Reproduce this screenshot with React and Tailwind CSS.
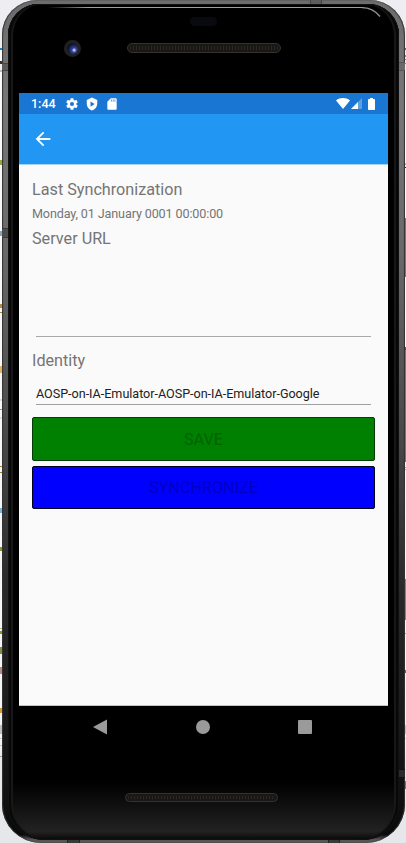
const leftSpecks = [
  'top-[48px] h-[2px] bg-[#1686cf]', 'top-[50px] h-[14px] bg-white', 'top-[61px] h-[3px] bg-[#333]', 'top-[70px] h-[2px] bg-[#b9bccb]',
  'top-[160px] h-[5px] bg-[#9aa63a]', 'top-[231px] h-[5px] bg-[#7fa9bb]', 'top-[304px] h-[4px] bg-[#bb8a4c]',
  'top-[312px] h-px bg-[#a88a30]', 'top-[366px] h-[7px] bg-[#ddb860]', 'top-[399px] h-[2px] bg-[#dcdce4]',
  'top-[409px] h-px bg-[#a1a239]', 'top-[417px] h-[2px] bg-[#dcdce4]', 'top-[466px] h-px bg-[#a07f35]',
  'top-[472px] h-px bg-[#a07f35]', 'top-[508px] h-[5px] bg-[#7cb5d8]', 'top-[547px] h-[4px] bg-[#8d9633]',
  'top-[628px] h-px bg-[#c4c270]', 'top-[631px] h-[3px] bg-[#92962e]', 'top-[647px] h-[7px] bg-[#83933c]',
  'top-[667px] h-[7px] bg-[#b98b83]', 'top-[708px] h-[5px] bg-[#d89a3d]', 'top-[725px] h-[9px] bg-[#bfc0c4]',
  'top-[738px] h-px bg-[#c8c9ce]', 'top-[745px] h-px bg-[#c8c9ce]', 'top-[756px] h-px bg-[#a0a0a0]',
];
const rightSpecks = [
  'top-[48px] h-[2px] bg-[#1686cf]', 'top-[55px] h-[2px] bg-[#a17bb8]', 'top-[59px] h-px bg-[#a17bb8]', 'top-[63px] h-px bg-[#a17bb8]',
  'top-[163px] h-[2px] bg-[#c3a6cf]', 'top-[167px] h-px bg-[#1818a8]', 'top-[218px] h-[59px] bg-[#777]',
  'top-[347px] h-[3px] bg-[#555]', 'top-[350px] h-[112px] bg-[#777]', 'top-[467px] h-px bg-[#c5a562]',
  'top-[469px] h-px bg-[#c5a562]', 'top-[579px] h-[41px] bg-[#858585]', 'top-[633px] h-px bg-[#c5a562]',
  'top-[670px] h-[3px] bg-[#9c5a2c]', 'top-[725px] h-[9px] bg-[#bfc0c4]', 'top-[738px] h-px bg-[#c8c9ce]', 'top-[781px] h-[8px] bg-[#777]',
];

function Speaker({ className }) {
  return (
    <div className={`rounded-full border border-[#343230] bg-[#1a1815] p-[2px] ${className}`}>
      <div className="h-full rounded-full bg-[repeating-linear-gradient(90deg,#2c2924_0_1px,#1a1815_1px_3px)]" />
    </div>
  );
}

function StatusBar() {
  return (
    <div className="flex h-[21px] items-center bg-[#1976d2] pl-[12px] pr-[13px] text-white">
      <span className="w-[26px] text-[12.5px] font-medium leading-[21px] whitespace-nowrap">1:44</span>
      <svg className="ml-[8px] size-[14px]" viewBox="0 0 24 24" fill="currentColor">
        <path d="M19.43 12.98c.04-.32.07-.64.07-.98s-.03-.66-.07-.98l2.11-1.65c.19-.15.24-.42.12-.64l-2-3.46c-.12-.22-.39-.3-.61-.22l-2.49 1c-.52-.4-1.08-.73-1.69-.98l-.38-2.65A.49.49 0 0 0 14 2h-4c-.25 0-.46.18-.49.42l-.38 2.65c-.61.25-1.17.59-1.69.98l-2.49-1c-.23-.09-.49 0-.61.22l-2 3.46c-.13.22-.07.49.12.64l2.11 1.65c-.04.32-.07.65-.07.98s.03.66.07.98l-2.11 1.65c-.19.15-.24.42-.12.64l2 3.46c.12.22.39.3.61.22l2.49-1c.52.4 1.08.73 1.69.98l.38 2.65c.03.24.24.42.49.42h4c.25 0 .46-.18.49-.42l.38-2.65c.61-.25 1.17-.59 1.69-.98l2.49 1c.23.09.49 0 .61-.22l2-3.46c.12-.22.07-.49-.12-.64l-2.11-1.65zM12 15.5a3.5 3.5 0 1 1 0-7 3.5 3.5 0 0 1 0 7z" />
      </svg>
      <svg className="ml-[6px] size-[14px]" viewBox="0 0 24 24" fill="currentColor" fillRule="evenodd">
        <path d="M12 1 3 5v6c0 5.55 3.84 10.74 9 12 5.16-1.26 9-6.45 9-12V5l-9-4zM9.500 7.500l7 4.500-7 4.500V7.500z" />
      </svg>
      <svg className="ml-[6px] size-[14px]" viewBox="0 0 24 24" fill="currentColor">
        <path d="M18 2h-8L4.02 8 4 20c0 1.1.9 2 2 2h12c1.1 0 2-.9 2-2V4c0-1.1-.9-2-2-2z" />
        <path d="M10 4h2v4h-2zM13 4h2v4h-2zM16 4h2v4h-2z" fill="#1976d2" opacity=".55" />
      </svg>
      <svg className="ml-auto h-[11px] w-[14px]" viewBox="0 0 14 11" fill="currentColor">
        <path d="M0 2.4C4-.7 10-.7 14 2.4L7 11z" />
      </svg>
      <svg className="ml-[1px] h-[11px] w-[11px]" viewBox="0 0 11 11" fill="currentColor">
        <path d="M0 11 11 0v11z" opacity=".3" />
        <path d="M0 11 7 4v7z" />
      </svg>
      <svg className="ml-[6px] h-[12px] w-[7px]" viewBox="0 0 7 12" fill="currentColor">
        <path d="M2 0h3v1h1.2q.8 0 .8.8v9.4q0 .8-.8.8H.8Q0 12 0 11.200V1.800Q0 1 .8 1H2z" />
      </svg>
    </div>
  );
}

export default function App() {
  return (
    <div className="relative h-[843px] w-[406px] overflow-hidden bg-[linear-gradient(#ededf2_0_70px,#fafafa_72px,#f4f4f7_740px,#e6e7ea_760px)] font-['Roboto',sans-serif]">
      {leftSpecks.map((c) => <i key={c} className={`absolute left-0 w-[3px] ${c}`} />)}
      {rightSpecks.map((c) => <i key={c} className={`absolute right-0 w-[2px] ${c}`} />)}

      <div className="relative ml-[2px] h-[843px] w-[403px] rounded-t-[35px] rounded-b-[39px] bg-[linear-gradient(#6c6c6c,#777_12%,#696969_30%,#484848_52%,#292929_70%,#151515_90%,#0a0a0a_99%,#5a5657_99.600%)] px-[6px] pt-[4px] pb-[3px] shadow-[inset_1px_0_1px_#333,inset_-1px_0_1px_#333]">
        <i className="absolute top-[63px] left-0 h-[8px] w-[7px] border-y border-[#444] bg-[#5c5c5c]" />
        <i className="absolute top-[228px] left-0 h-[10px] w-[7px] border-y border-[#3a3a3a] bg-[#4c4c4c]" />
        <i className="absolute top-[62px] right-0 h-[9px] w-[7px] border-y border-[#555] bg-[#6a6a6a]" />
        <i className="absolute top-[769px] right-0 h-[9px] w-[6px] border-y border-[#111] bg-[#2b2b2b]" />
        <i className="absolute top-0 left-[308px] h-[4px] w-[12px] border-x border-[#444] bg-[#5c5c5c]" />
        <i className="absolute bottom-0 left-[65px] h-[3px] w-[13px] border-x border-[#222] bg-[#3a3a3a]" />
        <i className="absolute bottom-0 left-[326px] h-[3px] w-[12px] border-x border-[#222] bg-[#3a3a3a]" />
        <div className="relative flex h-[836px] flex-col rounded-t-[31px] rounded-b-[36px] bg-[linear-gradient(#000_0_93%,#0b0b0b_95%,#222_99%,#080808)] px-[11px] pt-[89px] shadow-[inset_0_0_0_1px_#111,inset_3px_0_1px_#070707,inset_5px_0_1px_#1a1a1a,inset_-3px_0_1px_#070707,inset_-5px_0_1px_#1a1a1a]">
          <i className="absolute top-[3px] left-[40px] h-px w-[315px] bg-[linear-gradient(90deg,transparent,#9b9f9f_40px)]" />
          <svg className="absolute top-[3px] left-[354px] h-[14px] w-[20px]" viewBox="0 0 20 14" fill="none">
            <path d="M0 .6Q11 .8 18 9.500" stroke="#8f9393" strokeWidth="1.300" />
          </svg>
          <i className="absolute top-[13px] left-[182px] h-[9px] w-[27px] rounded-full bg-[#090a0f]" />
          <Speaker className="absolute top-[39px] left-[119px] h-[10px] w-[154px]" />
          <div className="absolute top-[36px] left-[56px] grid size-[17px] place-items-center rounded-full bg-[#222122]">
            <div className="size-[11px] rounded-full bg-[radial-gradient(circle_at_65%_65%,#b5bcfa_0_8%,#3545a0_22%,#15183f_55%,#07080f_85%)]" />
          </div>

          <div className="flex h-[613px] w-[369px] flex-col border-b border-[#c3c5c5] bg-[#fafafa]">
            <StatusBar />
            <div className="flex h-[51px] items-center border-b border-[#a8d2f5] bg-[#2196f3] pl-[13px]">
              <svg className="size-[22px]" viewBox="0 0 24 24" fill="white">
                <path d="M20 11H7.830l5.590-5.590L12 4l-8 8 8 8 1.410-1.410L7.830 13H20v-2z" />
              </svg>
            </div>
            <main className="flex flex-col pt-[13px] pr-[13px] pl-[13px] text-[#757575]">
              <h2 className="h-[24px] text-[16.2px] leading-[24px]">Last Synchronization</h2>
              <p className="h-[25px] text-[12.6px] leading-[24px] tracking-[-0.13px]">Monday, 01 January 0001 00:00:00</p>
              <h2 className="h-[24px] text-[16.2px] leading-[24px]">Server URL</h2>
              <div className="mx-[4px] h-[86px] border-b border-[#a9a9a9]" />
              <h2 className="mt-[12px] h-[24px] text-[16.2px] leading-[24px]">Identity</h2>
              <div className="mx-[4px] h-[32px] border-b border-[#a0a0a0] pt-[10px] text-[12.6px] leading-[22px] tracking-[-0.03px] whitespace-nowrap text-[#212121]">AOSP-on-IA-Emulator-AOSP-on-IA-Emulator-Google</div>
              <button className="mt-[12px] h-[44px] w-[343px] rounded-[2px] border border-[#073b07] bg-[#008000] pt-[2px] text-[16.2px] text-[#006200]">SAVE</button>
              <button className="mt-[5px] h-[43px] w-[343px] rounded-[2px] border border-[#000020] bg-[#0000ff] pt-[2px] text-[16.2px] text-[#0000c4]">SYNCHRONIZE</button>
            </main>
          </div>

          <div className="flex h-[42px] items-center pl-[74px] text-[#9a9a9a]">
            <svg className="h-[16px] w-[14px]" viewBox="0 0 14 16" fill="currentColor"><path d="M0 8 14 .5v15z" /></svg>
            <i className="ml-[89px] size-[14px] rounded-full bg-[#9a9a9a]" />
            <i className="ml-[88px] size-[14px] rounded-[1px] bg-[#9a9a9a]" />
          </div>
          <Speaker className="mt-[45px] ml-[106px] h-[9px] w-[153px]" />
        </div>
      </div>
    </div>
  );
}
